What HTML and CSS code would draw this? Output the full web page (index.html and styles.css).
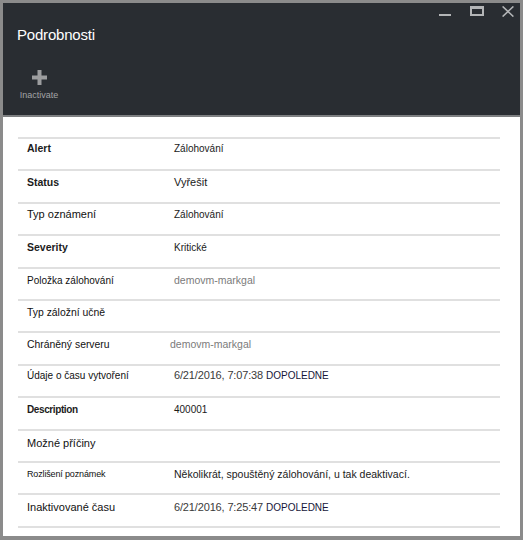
FILE: index.html
```html
<!DOCTYPE html>
<html lang="cs">
<head>
<meta charset="utf-8">
<title>Podrobnosti</title>
<link rel="stylesheet" href="styles.css">
</head>
<body>
<div class="window">
  <header class="header">
    <div class="controls">
      <svg class="ctl ctl-min" width="12" height="11" viewBox="0 0 12 11"><rect x="0" y="8" width="12" height="2" fill="#b3b5b7"/></svg>
      <svg class="ctl ctl-max" width="14" height="11" viewBox="0 0 14 11"><path fill-rule="evenodd" fill="#b3b5b7" d="M0 0H14V10H0Z M2 3H12V8H2Z"/></svg>
      <svg class="ctl ctl-close" width="12" height="11" viewBox="0 0 12 11"><path d="M0.6 0.4L11.4 10.6M11.4 0.4L0.6 10.6" stroke="#b3b5b7" stroke-width="1.5" fill="none"/></svg>
    </div>
    <h1 class="title">Podrobnosti</h1>
    <div class="commands">
      <div class="command">
        <svg class="command-icon" width="15" height="15" viewBox="0 0 15 15"><path d="M5.5 0H9.5V5.5H15V9.5H9.5V15H5.5V9.5H0V5.5H5.5Z" fill="#9c9d9f"/></svg>
        <span class="command-label">Inactivate</span>
      </div>
    </div>
  </header>
  <main class="content">
    <div class="table">
      <div class="row row--tight"><span class="label label--bold">Alert</span><span class="value value--sm">Zálohování</span></div>
      <div class="row"><span class="label label--bold">Status</span><span class="value value--lg">Vyřešit</span></div>
      <div class="row row--up"><span class="label">Typ oznámení</span><span class="value value--sm">Zálohování</span></div>
      <div class="row"><span class="label label--bold">Severity</span><span class="value value--sm">Kritické</span></div>
      <div class="row"><span class="label label--sm">Položka zálohování</span><span class="value value--link">demovm-markgal</span></div>
      <div class="row"><span class="label label--md">Typ záložní učně</span><span class="value"></span></div>
      <div class="row"><span class="label label--md">Chráněný serveru</span><span class="value value--link value--shift">demovm-markgal</span></div>
      <div class="row row--tight"><span class="label label--sm">Údaje o času vytvoření</span><span class="value value--lg value--time">6/21/2016, 7:07:38 <span class="ampm">DOPOLEDNE</span></span></div>
      <div class="row"><span class="label label--bold label--narrow">Description</span><span class="value value--sm">400001</span></div>
      <div class="row row--low"><span class="label label--lg">Možné příčiny</span><span class="value"></span></div>
      <div class="row"><span class="label label--xs">Rozlišení poznámek</span><span class="value value--md">Několikrát, spouštěný zálohování, u tak deaktivací.</span></div>
      <div class="row row--low"><span class="label label--lg">Inaktivované času</span><span class="value value--lg value--time">6/21/2016, 7:25:47 <span class="ampm">DOPOLEDNE</span></span></div>
    </div>
  </main>
</div>
</body>
</html>
```
FILE: styles.css
```css
html, body {
  margin: 0;
  padding: 0;
  background: #ffffff;
}

body {
  font-family: "Liberation Sans", Arial, sans-serif;
  color: #1a1a1a;
}

.window {
  width: 523px;
  height: 540px;
  box-sizing: border-box;
  border: 3px solid #8b8b8b;
  border-bottom-width: 4px;
  display: flex;
  flex-direction: column;
  background: #ffffff;
}

.header {
  height: 114px;
  box-sizing: border-box;
  background: #292d32;
  border-bottom: 2px solid #7d7f81;
  padding: 3px 6px 0 14px;
  display: flex;
  flex-direction: column;
}

.controls {
  display: flex;
  justify-content: flex-end;
  align-items: flex-start;
  gap: 18px;
  height: 11px;
}

.ctl {
  display: block;
}

.ctl-min {
  margin-right: 1px;
}

.title {
  margin: 9px 0 0 0;
  font-size: 15px;
  line-height: 18px;
  font-weight: normal;
  color: #ffffff;
  letter-spacing: -0.2px;
}

.commands {
  display: flex;
  margin-top: 26px;
  padding-left: 2px;
}

.command {
  display: flex;
  flex-direction: column;
  align-items: center;
  width: 40px;
}

.command-icon {
  display: block;
}

.command-label {
  margin-top: 5px;
  font-size: 9px;
  line-height: 11px;
  color: #a3a4a6;
}

.content {
  flex: 1;
  padding: 20px 20px 0 15px;
}

.table {
  border-bottom: 2px solid #e0e0e0;
}

.row {
  display: grid;
  grid-template-columns: 147px 1fr;
  height: 32.4px;
  box-sizing: border-box;
  border-top: 2px solid #e0e0e0;
  padding: 5px 0 0 9px;
  line-height: 13px;
  font-size: 11px;
}

.row--tight {
  padding-top: 3px;
}

.row--up {
  padding-top: 4px;
}

.row--low {
  padding-top: 6px;
}

.label {
  font-size: 11px;
  color: #111111;
  white-space: nowrap;
}

.label--bold {
  font-weight: bold;
  font-size: 10.5px;
  color: #1c1c1c;
}

.label--narrow {
  font-size: 10px;
  letter-spacing: -0.4px;
}

.label--sm {
  font-size: 10px;
}

.label--md {
  font-size: 10.4px;
}

.label--lg {
  font-size: 11px;
}

.label--xs {
  font-size: 9px;
  letter-spacing: -0.15px;
}

.value {
  white-space: nowrap;
  color: #1a1a1a;
}

.value--sm {
  font-size: 10px;
}

.value--md {
  font-size: 10.5px;
}

.value--lg {
  font-size: 11px;
}

.value--link {
  font-size: 10.5px;
  color: #7b7b7b;
}

.value--shift {
  margin-left: -4px;
}

.value--time {
  color: #3a3a3a;
  letter-spacing: -0.15px;
}

.ampm {
  font-size: 10px;
  color: #16163a;
  letter-spacing: 0;
}
```
